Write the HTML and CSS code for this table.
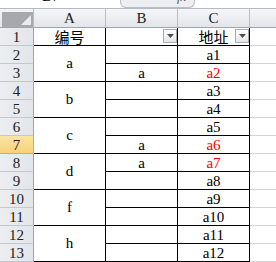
FILE: index.html
```html
<!DOCTYPE html>
<html>
<head>
<meta charset="utf-8">
<link rel="stylesheet" href="styles.css">
</head>
<body>
<div class="top">
  <div class="namebox"><span class="nametext">B7</span></div>
  <div class="fxarea"><span class="fx">fx</span></div>
  <div class="formula"></div>
</div>
<div class="sheet">
  <div class="corner"><svg width="31" height="15" viewBox="0 0 31 15"><rect x="0" y="0" width="31" height="15" fill="#a6a8ab"/><polygon points="29,3 29,13 19,13" fill="#e9eaec"/></svg></div>
  <div class="ch">A</div>
  <div class="ch">B</div>
  <div class="ch">C</div>
  <div class="ch chd"></div>

  <div class="rh">1</div>
  <div class="c cjk">编号</div>
  <div class="c"><span class="dd"><svg width="7" height="4" viewBox="0 0 7 4"><polygon points="0,0 7,0 3.5,4" fill="#4d4d4d"/></svg></span></div>
  <div class="c cjk">地址<span class="dd"><svg width="7" height="4" viewBox="0 0 7 4"><polygon points="0,0 7,0 3.5,4" fill="#4d4d4d"/></svg></span></div>
  <div class="d"></div>

  <div class="rh">2</div>
  <div class="c a">a</div>
  <div class="c"></div>
  <div class="c">a1</div>
  <div class="d"></div>

  <div class="rh">3</div>
  <div class="c">a</div>
  <div class="c red">a2</div>
  <div class="d"></div>

  <div class="rh">4</div>
  <div class="c a">b</div>
  <div class="c"></div>
  <div class="c">a3</div>
  <div class="d"></div>

  <div class="rh">5</div>
  <div class="c"></div>
  <div class="c">a4</div>
  <div class="d"></div>

  <div class="rh">6</div>
  <div class="c a">c</div>
  <div class="c"></div>
  <div class="c">a5</div>
  <div class="d"></div>

  <div class="rh sel">7</div>
  <div class="c">a</div>
  <div class="c red">a6</div>
  <div class="d"></div>

  <div class="rh">8</div>
  <div class="c a">d</div>
  <div class="c">a</div>
  <div class="c red">a7</div>
  <div class="d"></div>

  <div class="rh">9</div>
  <div class="c"></div>
  <div class="c">a8</div>
  <div class="d"></div>

  <div class="rh">10</div>
  <div class="c a">f</div>
  <div class="c"></div>
  <div class="c">a9</div>
  <div class="d"></div>

  <div class="rh">11</div>
  <div class="c"></div>
  <div class="c">a10</div>
  <div class="d"></div>

  <div class="rh">12</div>
  <div class="c a">h</div>
  <div class="c"></div>
  <div class="c">a11</div>
  <div class="d"></div>

  <div class="rh">13</div>
  <div class="c"></div>
  <div class="c">a12</div>
  <div class="d"></div>
</div>
</body>
</html>
```
FILE: styles.css
```css
* { box-sizing: border-box; }
html, body {
  margin: 0;
  padding: 0;
  background: #ffffff;
  overflow: hidden;
}
body {
  width: 276px;
  height: 262px;
  font-family: "Liberation Serif", "Noto Sans CJK SC", serif;
  font-size: 15px;
  color: #000;
}
.top {
  display: flex;
  height: 9px;
  border-bottom: 1px solid #b4b9c1;
  overflow: hidden;
}
.namebox {
  width: 120px;
  background: #fff;
}
.nametext {
  display: block;
  margin-top: -11px;
  padding-left: 42px;
  font-family: "Liberation Serif", serif;
  font-size: 15px;
  line-height: 14px;
  color: #000;
}
.fxarea {
  width: 75px;
  background: #eceef1;
  border: 1px solid #b9bec6;
  border-top: none;
  border-radius: 0 0 6px 6px;
  overflow: hidden;
}
.fx {
  display: block;
  margin-top: -10px;
  padding-left: 56px;
  font-family: "Liberation Serif", serif;
  font-style: italic;
  font-size: 13px;
  line-height: 13px;
  color: #555;
}
.formula {
  flex: 1;
  background: #fff;
}
.sheet {
  display: grid;
  grid-template-columns: 34px 72px 72px 72px 26px;
  grid-template-rows: 19px repeat(13, 18px);
}
.corner {
  background: linear-gradient(#f3f4f6, #e3e6ea);
  border-right: 1px solid #b9bec6;
  border-bottom: 1px solid #9da5b1;
  padding: 3px 0 0 2px;
}
.corner svg { display: block; }
.ch {
  background: linear-gradient(#f5f6f8, #e2e5ea);
  border-right: 1px solid #b9bec6;
  border-bottom: 1px solid #9da5b1;
  text-align: center;
  line-height: 18px;
  color: #222;
}
.chd { border-right: none; }
.rh {
  background: linear-gradient(90deg, #eceef1, #e2e5e9);
  border-right: 1px solid #9da5b1;
  border-bottom: 1px solid #c3c8cf;
  text-align: center;
  line-height: 17px;
  padding-top: 1px;
  color: #222;
}
.rh.sel {
  background: linear-gradient(#fbe3a5, #f7d27a);
  border-right: 1px solid #e2a94c;
  border-bottom: 1px solid #e2a94c;
  color: #222;
}
.c {
  position: relative;
  border-right: 1px solid #000;
  border-bottom: 1px solid #000;
  text-align: center;
  line-height: 17px;
  padding-top: 1px;
  white-space: nowrap;
}
.cjk { font-size: 15px; line-height: 16px; padding-top: 2px; }
.a {
  grid-row: span 2;
  display: flex;
  align-items: center;
  justify-content: center;
  padding-top: 0;
}
.red { color: #ff0000; }
.d {
  border-bottom: 1px solid #d4d4d4;
}
.dd {
  position: absolute;
  right: 0;
  top: 1px;
  width: 14px;
  height: 14px;
  border: 1px solid #a9adb3;
  background: linear-gradient(#ffffff, #e4e6ea);
  display: flex;
  align-items: center;
  justify-content: center;
}
.dd svg { display: block; }
```
